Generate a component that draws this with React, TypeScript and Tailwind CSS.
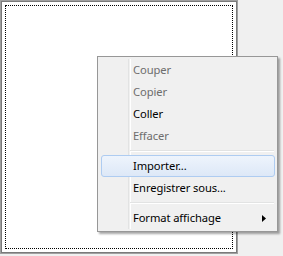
import React from "react";

type Item = { label: string; disabled?: boolean; hover?: boolean; submenu?: boolean } | "sep";

const ITEMS: Item[] = [
  { label: "Couper", disabled: true },
  { label: "Copier", disabled: true },
  { label: "Coller" },
  { label: "Effacer", disabled: true },
  "sep",
  { label: "Importer...", hover: true },
  { label: "Enregistrer sous..." },
  "sep",
  { label: "Format affichage", submenu: true },
];

export default function App() {
  return (
    <div
      className="relative w-[283px] h-[256px] bg-[#f0f0f0] overflow-hidden"
      style={{ fontFamily: '"Noto Sans", "Open Sans", sans-serif' }}
    >
      {/* list box with focus rectangle */}
      <div className="w-[238px] h-[254px] border border-[#a0a0a0]">
        <div className="w-full h-full border border-[#7a7a7a] bg-white p-[3px]">
          <div className="w-full h-full border border-dotted border-black" />
        </div>
      </div>

      {/* context menu */}
      <div className="absolute left-[97px] top-[56px] w-[181px] h-[176px] border border-[#979797] bg-[#f0f0f0] py-[2px] pl-[2px] pr-[1px] shadow-[2px_2px_2px_rgba(0,0,0,0.35)]">
        <div className="relative h-full">
          <div className="absolute left-[28px] top-0 bottom-0 w-[2px] border-l border-[#e2e3e3] bg-[#f0f0f0] shadow-[1px_0_0_#ffffff]" />
          {ITEMS.map((it, i) =>
            it === "sep" ? (
              <div key={i} className="relative h-[8px] flex items-center pl-[30px] pr-[2px]">
                <div className="w-full h-[2px] border-t border-[#e2e3e3] border-b border-b-white" />
              </div>
            ) : (
              <div
                key={i}
                className={`relative h-[22px] flex items-center pl-[33px] text-[11.2px] tracking-[-0.1px] ${
                  it.disabled ? "text-[#6d6d6d]" : "text-black"
                }`}
              >
                {it.hover && (
                  <div className="absolute left-[1px] right-[1px] top-0 bottom-0 rounded-[3px] border border-[#aeccf1] bg-gradient-to-b from-[#eef4fc] to-[#dde8f7]" />
                )}
                <span className="relative leading-none">{it.label}</span>
                {it.submenu && (
                  <svg className="absolute right-[10px] top-[8px]" width="4" height="7" viewBox="0 0 4 7">
                    <path d="M0 0 L4 3.5 L0 7 Z" fill="#000" />
                  </svg>
                )}
              </div>
            )
          )}
        </div>
      </div>
    </div>
  );
}
